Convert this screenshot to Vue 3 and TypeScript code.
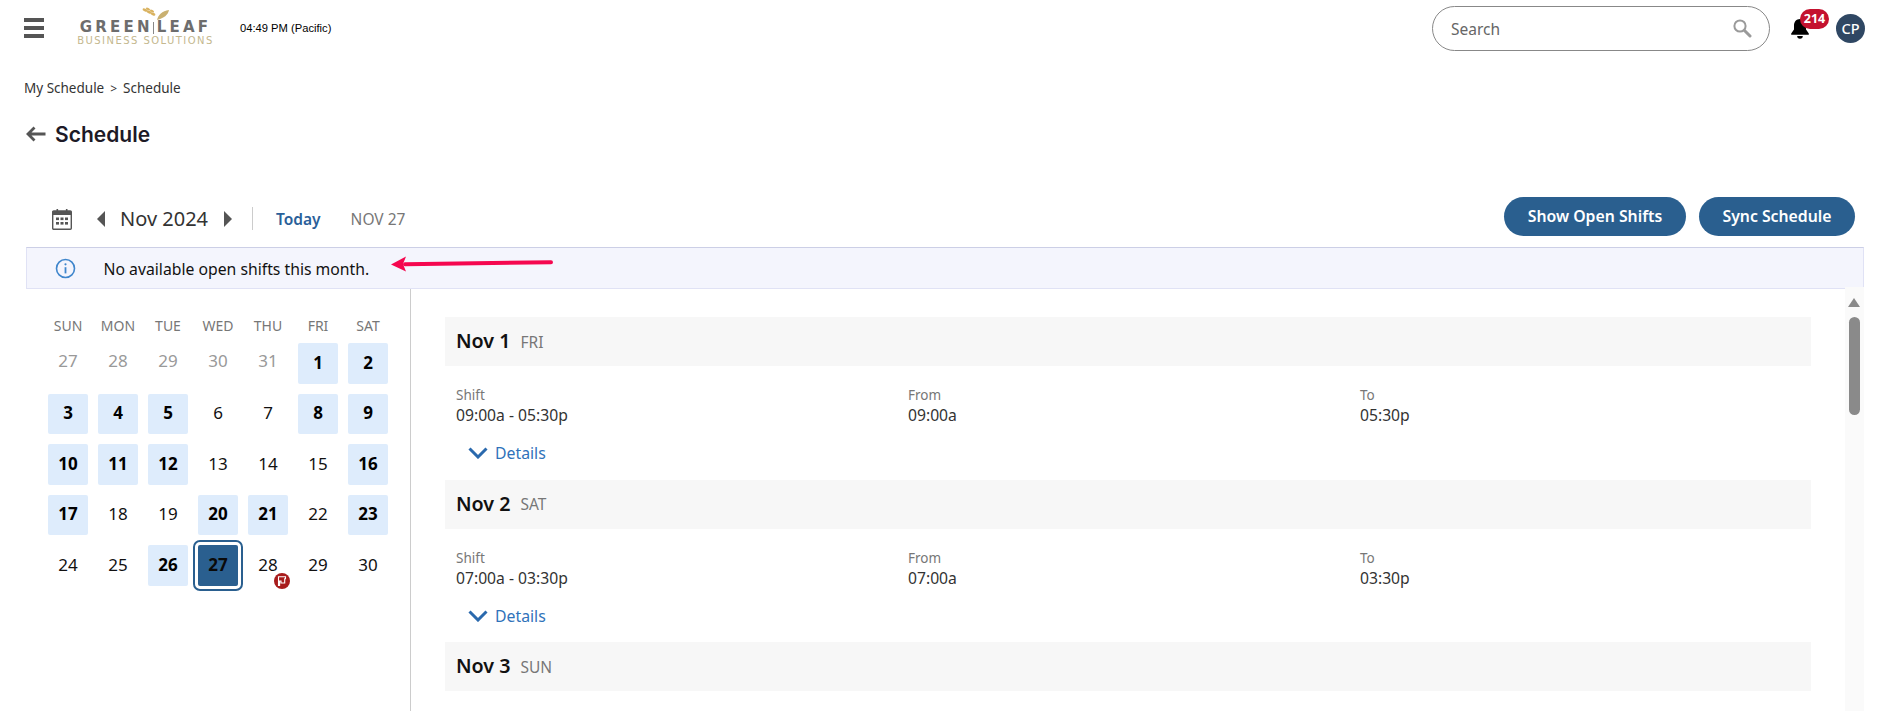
<script setup lang="ts">
interface Cell { n: number; kind: 'muted' | 'work' | 'plain' | 'today'; flag?: boolean }
const weekdays = ['SUN', 'MON', 'TUE', 'WED', 'THU', 'FRI', 'SAT']
const work = [1, 2, 3, 4, 5, 8, 9, 10, 11, 12, 16, 17, 20, 21, 23, 26]
const cells: Cell[] = [
  ...[27, 28, 29, 30, 31].map((n): Cell => ({ n, kind: 'muted' })),
  ...Array.from({ length: 30 }, (_, i): Cell => {
    const n = i + 1
    if (n === 27) return { n, kind: 'today' }
    return { n, kind: work.includes(n) ? 'work' : 'plain', flag: n === 28 }
  }),
]
const days = [
  { date: 'Nov 1', dow: 'FRI', shift: '09:00a - 05:30p', from: '09:00a', to: '05:30p' },
  { date: 'Nov 2', dow: 'SAT', shift: '07:00a - 03:30p', from: '07:00a', to: '03:30p' },
  { date: 'Nov 3', dow: 'SUN', shift: '', from: '', to: '' },
]
</script>

<template>
  <div class="page">
    <header class="topbar">
      <div class="burger"><i></i><i></i><i></i></div>
      <div class="logo">
        <svg class="wheat" width="34" height="14" viewBox="0 0 34 14">
          <g fill="#d9b25f">
            <ellipse cx="6" cy="3" rx="2.6" ry="1.3" transform="rotate(25 6 3)" />
            <ellipse cx="10" cy="5" rx="2.6" ry="1.3" transform="rotate(25 10 5)" />
            <ellipse cx="14" cy="7" rx="2.6" ry="1.3" transform="rotate(25 14 7)" />
            <ellipse cx="9" cy="2" rx="2.2" ry="1.1" transform="rotate(25 9 2)" />
            <ellipse cx="13" cy="4" rx="2.2" ry="1.1" transform="rotate(25 13 4)" />
          </g>
          <path d="M18 13 C19 8 23 4 30 3 C29 8 25 11 18 13Z" fill="#c9b070" />
        </svg>
        <div class="logo-main">GREEN<span class="logo-bar"></span>LEAF</div>
        <div class="logo-sub">BUSINESS SOLUTIONS</div>
      </div>
      <div class="clock">04:49 PM (Pacific)</div>
      <div class="search">
        <span class="search-label">Search</span>
        <svg width="20" height="20" viewBox="0 0 20 20" fill="none">
          <circle cx="8" cy="8" r="5.6" stroke="#9a9a9a" stroke-width="2" />
          <path d="M12.5 12.5 L18 18" stroke="#9a9a9a" stroke-width="3" stroke-linecap="round" />
        </svg>
      </div>
      <div class="bell">
        <svg width="20" height="21" viewBox="0 0 20 21">
          <path d="M10 1c-3.6 0-6 2.8-6 6.4v4.2L1.2 15.6v1.2h17.6v-1.2L16 11.6V7.4C16 3.8 13.6 1 10 1z" fill="#000" />
          <path d="M7.2 18a2.8 2.8 0 0 0 5.6 0z" fill="#000" />
        </svg>
        <span class="badge">214</span>
      </div>
      <div class="avatar">CP</div>
    </header>

    <nav class="crumbs">My Schedule<span class="sep">&gt;</span>Schedule</nav>

    <div class="title">
      <svg width="20" height="16" viewBox="0 0 20 16" fill="none">
        <path d="M19.5 8H2M8.5 1.5 2 8l6.5 6.5" stroke="#555" stroke-width="2.8" />
      </svg>
      <h1>Schedule</h1>
    </div>

    <div class="toolbar">
      <svg class="cal-icon" width="20" height="22" viewBox="0 0 20 22">
        <rect x="0.7" y="3" width="18.6" height="18.2" rx="1" fill="#fff" stroke="#555" stroke-width="1.4" />
        <rect x="0.7" y="3" width="18.6" height="4" fill="#555" />
        <rect x="4.5" y="1" width="1.6" height="4" fill="#555" />
        <rect x="13.9" y="1" width="1.6" height="4" fill="#555" />
        <g fill="#555">
          <rect x="4" y="9.5" width="3" height="2.6" /><rect x="8.5" y="9.5" width="3" height="2.6" /><rect x="13" y="9.5" width="3" height="2.6" />
          <rect x="4" y="14" width="3" height="2.6" /><rect x="8.5" y="14" width="3" height="2.6" /><rect x="13" y="14" width="3" height="2.6" />
        </g>
      </svg>
      <span class="tri tri-l"></span>
      <span class="month">Nov 2024</span>
      <span class="tri tri-r"></span>
      <span class="vline"></span>
      <span class="today-link">Today</span>
      <span class="cur">NOV 27</span>
      <div class="actions">
        <button class="pill open">Show Open Shifts</button>
        <button class="pill sync">Sync Schedule</button>
      </div>
    </div>

    <div class="banner">
      <svg width="21" height="21" viewBox="0 0 21 21" fill="none">
        <circle cx="10.5" cy="10.5" r="9" stroke="#3f86cc" stroke-width="1.6" />
        <circle cx="10.5" cy="6.3" r="1.1" fill="#3f86cc" />
        <path d="M10.5 9.2v6.2" stroke="#3f86cc" stroke-width="1.8" />
      </svg>
      <span class="banner-text">No available open shifts this month.</span>
      <svg class="red-arrow" width="162" height="16" viewBox="0 0 162 16">
        <path d="M160 6.3 L14 8.2" stroke="#f5074f" stroke-width="4" stroke-linecap="round" />
        <path d="M0 8.5 L15 0.5 L12 8 L15 15.5Z" fill="#f5074f" />
      </svg>
    </div>

    <main class="main">
      <section class="cal">
        <div class="grid">
          <div v-for="d in weekdays" :key="d" class="dow">{{ d }}</div>
          <div v-for="c in cells" :key="c.kind + c.n" class="cell" :class="c.kind">
            <span>{{ c.n }}</span>
            <svg v-if="c.flag" class="flag" width="16" height="16" viewBox="0 0 16 16">
              <circle cx="8" cy="8" r="8" fill="#a81c1c" />
              <path d="M4.5 13V3.800h7v2h-.8V10H7V8H5.600v5" fill="none" stroke="#fff" stroke-width="1.100" />
            </svg>
          </div>
        </div>
      </section>

      <section class="list">
        <article v-for="d in days" :key="d.date" class="day">
          <div class="day-head"><strong>{{ d.date }}</strong><span>{{ d.dow }}</span></div>
          <template v-if="d.shift">
            <div class="cols">
              <div><label>Shift</label><p>{{ d.shift }}</p></div>
              <div><label>From</label><p>{{ d.from }}</p></div>
              <div><label>To</label><p>{{ d.to }}</p></div>
            </div>
            <div class="details">
              <svg width="20" height="12" viewBox="0 0 20 12" fill="none">
                <path d="M1.500 1.500 10 10l8.500-8.500" stroke="#2a69ad" stroke-width="3" />
              </svg>
              <span>Details</span>
            </div>
          </template>
        </article>
      </section>

      <aside class="scroll">
        <span class="up"></span>
        <span class="thumb"></span>
      </aside>
    </main>
  </div>
</template>

<style>
html, body { margin: 0; padding: 0; overflow: hidden; background: #fff; }
</style>

<style scoped>
.page { height: 711px; overflow: hidden; font-family: "Noto Sans", sans-serif; color: #222; display: flex; flex-direction: column; }
.topbar { height: 56px; display: flex; align-items: center; padding: 0 22px 0 24px; flex: none; }
.burger { width: 20px; display: flex; flex-direction: column; gap: 4px; }
.burger i { display: block; height: 4px; background: #555; }
.logo { position: relative; width: 137px; margin-left: 33px; padding-top: 11px; font-family: "DejaVu Sans", sans-serif; text-align: center; line-height: 1; }
.wheat { position: absolute; left: 62px; top: -3px; }
.logo-main { font-size: 15px; font-weight: 700; color: #6d6d6d; letter-spacing: 3.200px; display: flex; justify-content: center; align-items: center; height: 13px; white-space: nowrap; }
.logo-bar { width: 1px; height: 12px; background: #888; margin: 0 3px 0 0; }
.logo-sub { font-size: 10px; color: #c4b88e; letter-spacing: 1.450px; margin-top: 2px; white-space: nowrap; }
.clock { font-family: "Liberation Sans", sans-serif; font-size: 11.200px; color: #000; margin-left: 26px; }
.search { margin-left: auto; width: 338px; height: 45px; box-sizing: border-box; border: 1px solid #888; border-radius: 23px; display: flex; align-items: center; justify-content: space-between; padding: 0 17px 0 18px; font-size: 15.500px; color: #666; }
.search-label { padding-top: 2px; }
.bell { position: relative; width: 20px; height: 21px; margin-left: 20px; margin-top: 1px; }
.bell svg { display: block; }
.badge { position: absolute; left: 10px; top: -9px; width: 29px; height: 20px; border-radius: 10px; background: #c4122f; color: #fff; font-size: 12.500px; font-weight: 700; line-height: 20px; text-align: center; }
.avatar { width: 29px; height: 29px; margin-left: 26px; border-radius: 50%; background: #2f4763; color: #fff; font-size: 14.500px; font-weight: 500; line-height: 29px; text-align: center; }
.crumbs { margin: 22px 0 0 24px; font-size: 13.500px; line-height: 20px; color: #333; flex: none; }
.sep { margin: 0 6px; font-size: 12px; }
.title { display: flex; align-items: center; gap: 9px; margin: 20px 0 0 26px; height: 30px; flex: none; }
.title h1 { margin: 0; font-family: "Inter", sans-serif; font-size: 21px; font-weight: 600; color: #1d1a26; }
.toolbar { display: flex; align-items: center; height: 40px; margin-top: 47px; padding: 0 32px 0 52px; flex: none; }
.cal-icon { margin-top: 5px; }
.tri { width: 0; height: 0; border-top: 8px solid transparent; border-bottom: 8px solid transparent; margin-top: 5px; }
.tri-l { border-right: 8px solid #555; margin-left: 25px; }
.tri-r { border-left: 8px solid #555; margin-left: 16px; }
.month { font-size: 20px; margin-left: 15px; margin-top: 5px; color: #333; }
.vline { width: 1px; height: 23px; background: #ccc; margin-left: 20px; margin-top: 5px; }
.today-link { margin-left: 23px; margin-top: 5px; font-size: 15.500px; font-weight: 600; color: #2a6099; }
.cur { margin-left: 30px; margin-top: 5px; font-size: 15.500px; color: #777; }
.actions { margin-left: auto; display: flex; gap: 13px; }
.pill { height: 39px; border: 0; border-radius: 20px; background: #2a5f8f; color: #fff; font-family: inherit; font-size: 15.800px; font-weight: 600; padding: 0; }
.open { width: 182px; }
.sync { width: 156px; }
.banner { position: relative; height: 42px; margin: 11px 23px 0 26px; box-sizing: border-box; border: 1px solid #e0e2f5; border-top-color: #cccfe6; background: #f4f5fd; display: flex; align-items: center; padding-left: 28px; font-size: 15.750px; color: #111; flex: none; }
.banner-text { margin-left: 27.500px; padding-top: 2px; }
.red-arrow { position: absolute; left: 364px; top: 8px; }
.main { flex: 1; min-height: 0; display: flex; margin-right: 23px; }
.cal { width: 410px; border-right: 1px solid #ccc; flex: none; box-sizing: content-box; }
.grid { display: grid; grid-template-columns: repeat(7, 40px); column-gap: 10px; grid-auto-rows: 40.500px; row-gap: 10px; margin: 22px 0 0 48px; grid-template-rows: 22px; }
.dow { font-size: 14px; color: #777; text-align: center; line-height: 30px; height: 22px; }
.cell { position: relative; display: flex; align-items: center; justify-content: center; font-size: 17px; border-radius: 2px; color: #111; padding-bottom: 2px; box-sizing: border-box; }
.muted { color: #999; padding-bottom: 6px; }
.work { background: #deecfc; font-weight: 700; color: #000; }
.today { background: #2a5f8f; font-weight: 700; color: #0a0a0a; outline: 2px solid #2a5f8f; outline-offset: 3px; }
.flag { position: absolute; left: 26px; top: 28px; }
.list { flex: 1; min-width: 0; padding: 28px 34px 0 34px; }
.day { height: 162.500px; }
.day-head { height: 49px; background: #f7f7f7; display: flex; align-items: center; gap: 10px; padding-left: 11px; }
.day-head strong { font-size: 19.700px; font-weight: 600; color: #111; margin-bottom: 2px; }
.day-head span { font-size: 15.500px; color: #777; }
.cols { display: grid; grid-template-columns: repeat(3, 452px); padding: 19px 0 0 11px; }
.cols label { display: block; font-size: 13.500px; line-height: 20px; color: #777; }
.cols p { margin: 0; font-size: 15.700px; line-height: 20px; color: #333; }
.details { display: flex; align-items: center; gap: 7px; margin: 16px 0 0 23px; font-size: 15.800px; line-height: 24px; color: #2f72ba; }
.scroll { width: 19px; background: #fafafa; position: relative; flex: none; margin-top: -2px; }
.up { position: absolute; left: 3px; top: 11px; border-left: 6.500px solid transparent; border-right: 6.500px solid transparent; border-bottom: 9px solid #8a8a8a; }
.thumb { position: absolute; left: 4px; top: 30px; width: 11px; height: 98px; background: #8a8a8a; border-radius: 6px; }
</style>
